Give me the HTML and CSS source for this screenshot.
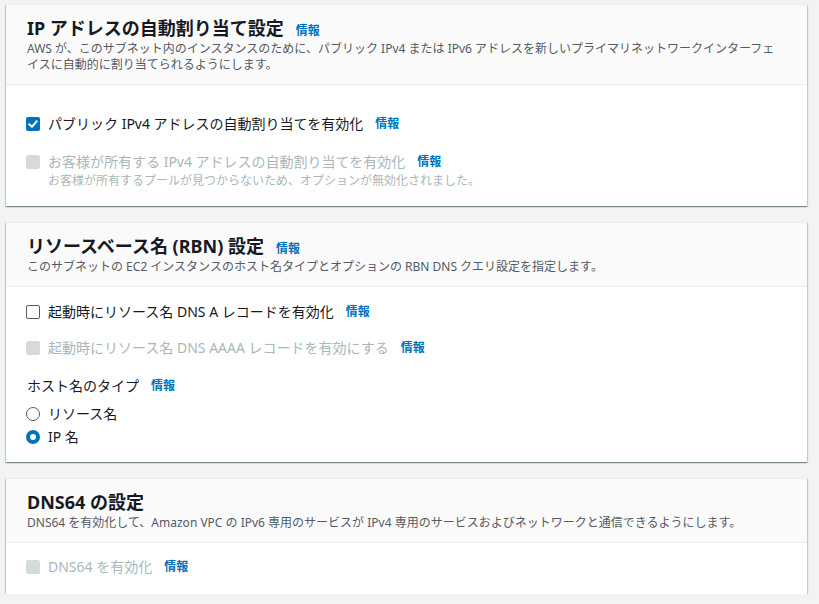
FILE: index.html
```html
<!DOCTYPE html>
<html lang="ja">
<head>
<meta charset="utf-8">
<title>サブネット設定</title>
<link rel="stylesheet" href="styles.css">
</head>
<body>
<main class="page">
  <section class="card">
    <header class="card-header">
      <h2 class="card-title">IP アドレスの自動割り当て設定<a class="info info--title" href="#">情報</a></h2>
      <p class="card-desc">AWS が、このサブネット内のインスタンスのために、パブリック IPv4 または IPv6 アドレスを新しいプライマリネットワークインターフェイスに自動的に割り当てられるようにします。</p>
    </header>
    <div class="card-body body-1">
      <div class="check-row">
        <span class="box box--checked"><svg viewBox="0 0 14 14" width="14" height="14"><path d="M3.2 7.2 L5.9 9.8 L10.8 4.2" fill="none" stroke="#fff" stroke-width="2" stroke-linecap="round" stroke-linejoin="round"/></svg></span>
        <div class="check-text"><span class="label">パブリック IPv4 アドレスの自動割り当てを有効化</span><a class="info" href="#">情報</a></div>
      </div>
      <div class="check-row row-gap-16">
        <span class="box box--disabled"></span>
        <div class="check-col">
          <div class="check-text"><span class="label label--disabled">お客様が所有する IPv4 アドレスの自動割り当てを有効化</span><a class="info" href="#">情報</a></div>
          <p class="hint">お客様が所有するプールが見つからないため、オプションが無効化されました。</p>
        </div>
      </div>
    </div>
  </section>

  <section class="card">
    <header class="card-header">
      <h2 class="card-title">リソースベース名 (RBN) 設定<a class="info info--title" href="#">情報</a></h2>
      <p class="card-desc">このサブネットの EC2 インスタンスのホスト名タイプとオプションの RBN DNS クエリ設定を指定します。</p>
    </header>
    <div class="card-body body-2">
      <div class="check-row">
        <span class="box"></span>
        <div class="check-text"><span class="label">起動時にリソース名 DNS A レコードを有効化</span><a class="info" href="#">情報</a></div>
      </div>
      <div class="check-row row-gap-14">
        <span class="box box--disabled"></span>
        <div class="check-text"><span class="label label--disabled">起動時にリソース名 DNS AAAA レコードを有効にする</span><a class="info" href="#">情報</a></div>
      </div>
      <div class="field-label row-gap-16"><span class="label">ホスト名のタイプ</span><a class="info" href="#">情報</a></div>
      <div class="check-row row-gap-6">
        <span class="radio"></span>
        <span class="label">リソース名</span>
      </div>
      <div class="check-row row-gap-1">
        <span class="radio radio--checked"></span>
        <span class="label">IP 名</span>
      </div>
    </div>
  </section>

  <section class="card">
    <header class="card-header">
      <h2 class="card-title">DNS64 の設定</h2>
      <p class="card-desc">DNS64 を有効化して、Amazon VPC の IPv6 専用のサービスが IPv4 専用のサービスおよびネットワークと通信できるようにします。</p>
    </header>
    <div class="card-body body-3">
      <div class="check-row">
        <span class="box box--disabled"></span>
        <div class="check-text"><span class="label label--disabled">DNS64 を有効化</span><a class="info" href="#">情報</a></div>
      </div>
    </div>
  </section>
</main>
</body>
</html>
```

FILE: styles.css
```css
html, body {
  margin: 0;
  padding: 0;
  background: #f2f3f3;
}

body {
  font-family: "Noto Sans", "Noto Sans CJK JP", sans-serif;
  color: #16191f;
}

.page {
  padding: 4px 12px 0 6px;
  display: flex;
  flex-direction: column;
  gap: 16px;
}

.card {
  background: #fff;
  border-top: 1px solid #eaeded;
  box-shadow: 0 1px 1px 0 rgba(0, 28, 36, 0.3), 1px 1px 1px 0 rgba(0, 28, 36, 0.15), -1px 1px 1px 0 rgba(0, 28, 36, 0.15);
}

.card-header {
  background: #fafafa;
  border-bottom: 1px solid #eaeded;
  padding: 10px 28px 11px 21px;
}

.card-title {
  margin: 0;
  height: 26px;
  font-size: 18px;
  line-height: 26px;
  font-weight: 700;
  color: #16191f;
  display: flex;
  align-items: baseline;
}

.card-desc {
  margin: 0;
  font-size: 12px;
  line-height: 16px;
  color: #545b64;
}

.body-1 { padding: 28px 20px 17px 20px; }
.body-2 { padding: 14px 20px 14px 20px; }
.body-3 { padding: 13px 20px 16px 20px; }

.row-gap-16 { margin-top: 16px; }
.row-gap-14 { margin-top: 14px; }
.row-gap-6 { margin-top: 6px; }
.row-gap-1 { margin-top: 1px; }

.check-row {
  display: flex;
  align-items: flex-start;
  gap: 8px;
}

.check-col {
  display: flex;
  flex-direction: column;
}

.check-text,
.field-label {
  display: flex;
  align-items: center;
  line-height: 22px;
}

.label {
  font-size: 14px;
  line-height: 22px;
  color: #16191f;
}

.label--disabled {
  color: #aab7b8;
}

.field-label .label {
  padding-left: 1px;
}

.hint {
  margin: 0;
  font-size: 12px;
  line-height: 16px;
  color: #aab7b8;
}

.info {
  font-size: 12px;
  font-weight: 700;
  color: #0073bb;
  text-decoration: none;
  margin-left: 12px;
  line-height: 22px;
}

.info--title {
  margin-left: 12px;
  line-height: 20px;
}

.box {
  flex: none;
  box-sizing: border-box;
  width: 14px;
  height: 14px;
  margin-top: 4px;
  border: 1.5px solid #545b64;
  border-radius: 2px;
  background: #fff;
  display: flex;
}

.box--checked {
  background: #0073bb;
  border: none;
}

.box--disabled {
  background: #d5dbdb;
  border: 1px solid #d5dbdb;
}

.radio {
  flex: none;
  box-sizing: border-box;
  width: 14px;
  height: 14px;
  margin-top: 4px;
  border: 1.5px solid #545b64;
  border-radius: 50%;
  background: #fff;
}

.radio--checked {
  border: 4px solid #0073bb;
}
```
